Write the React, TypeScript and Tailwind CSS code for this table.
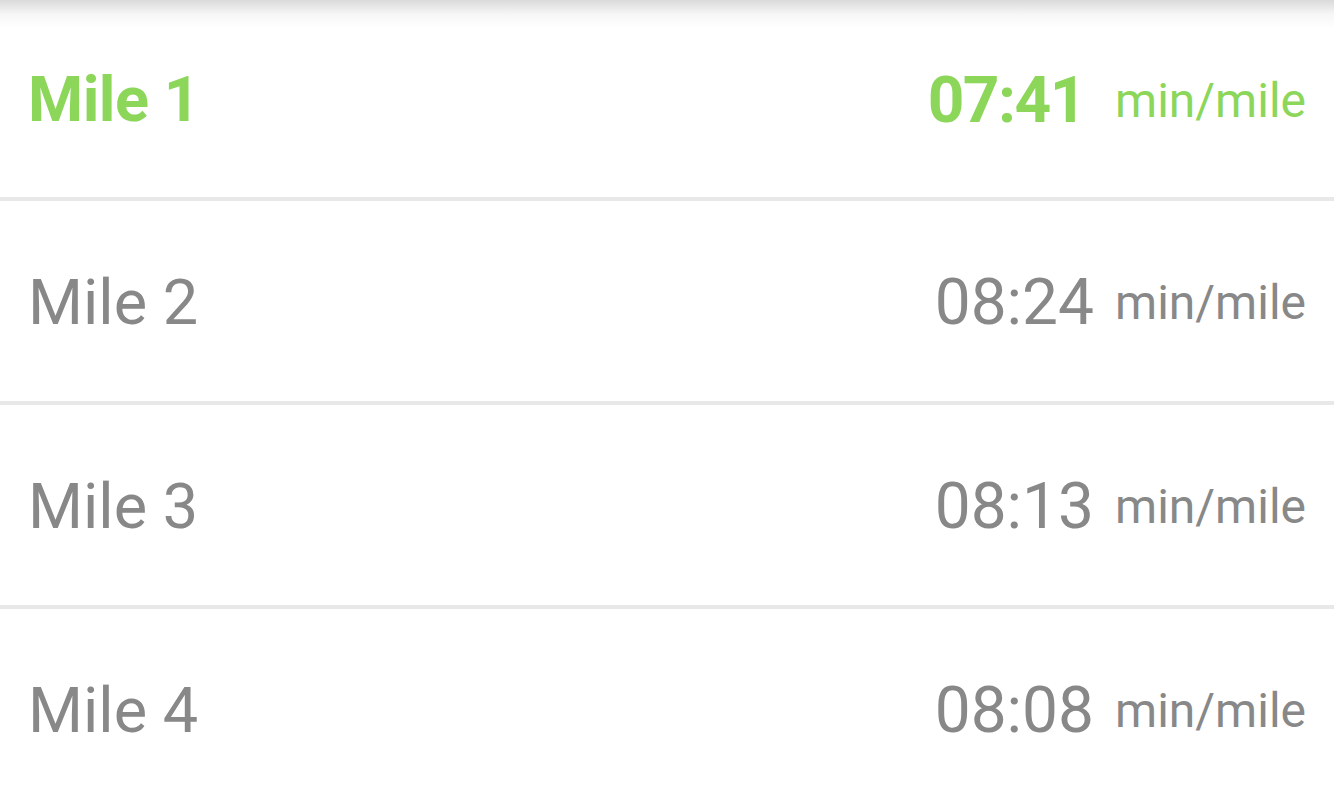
import React from "react";

const rows = [
  { label: "Mile 1", pace: "07:41", active: true },
  { label: "Mile 2", pace: "08:24", active: false },
  { label: "Mile 3", pace: "08:13", active: false },
  { label: "Mile 4", pace: "08:08", active: false },
];

export default function App() {
  return (
    <div
      className="relative w-[1334px] h-[806px] overflow-hidden bg-white"
      style={{ fontFamily: "Roboto, 'Noto Sans', sans-serif" }}
    >
      <div className="flex flex-col">
        {rows.map((r, i) => (
          <div key={r.label} className="flex flex-col">
            <div
              className={`flex items-center justify-between pl-[28px] pr-[28px] pt-[4px] ${
                i === 0 ? "h-[197px]" : "h-[200px]"
              } ${r.active ? "text-[#8cd65a]" : "text-[#888888]"}`}
            >
              <span
                className={`text-[63px] leading-normal ${
                  r.active ? "font-bold tracking-[-0.5px]" : "font-normal"
                }`}
              >
                {r.label}
              </span>
              <div className="flex items-center">
                <span
                  className={`text-[64px] leading-normal ${
                    r.active ? "font-bold mr-[30px] tracking-[-1.5px]" : "font-normal mr-[21px]"
                  }`}
                >
                  {r.pace}
                </span>
                <span className="text-[48px] leading-normal">min/mile</span>
              </div>
            </div>
            {i < rows.length - 1 && <div className="h-[4px] bg-[#e8e8e8]" />}
          </div>
        ))}
      </div>
      <div className="pointer-events-none absolute left-0 right-0 top-0 h-[28px] bg-gradient-to-b from-[#dadada] via-[#f6f6f6] to-transparent" />
    </div>
  );
}
